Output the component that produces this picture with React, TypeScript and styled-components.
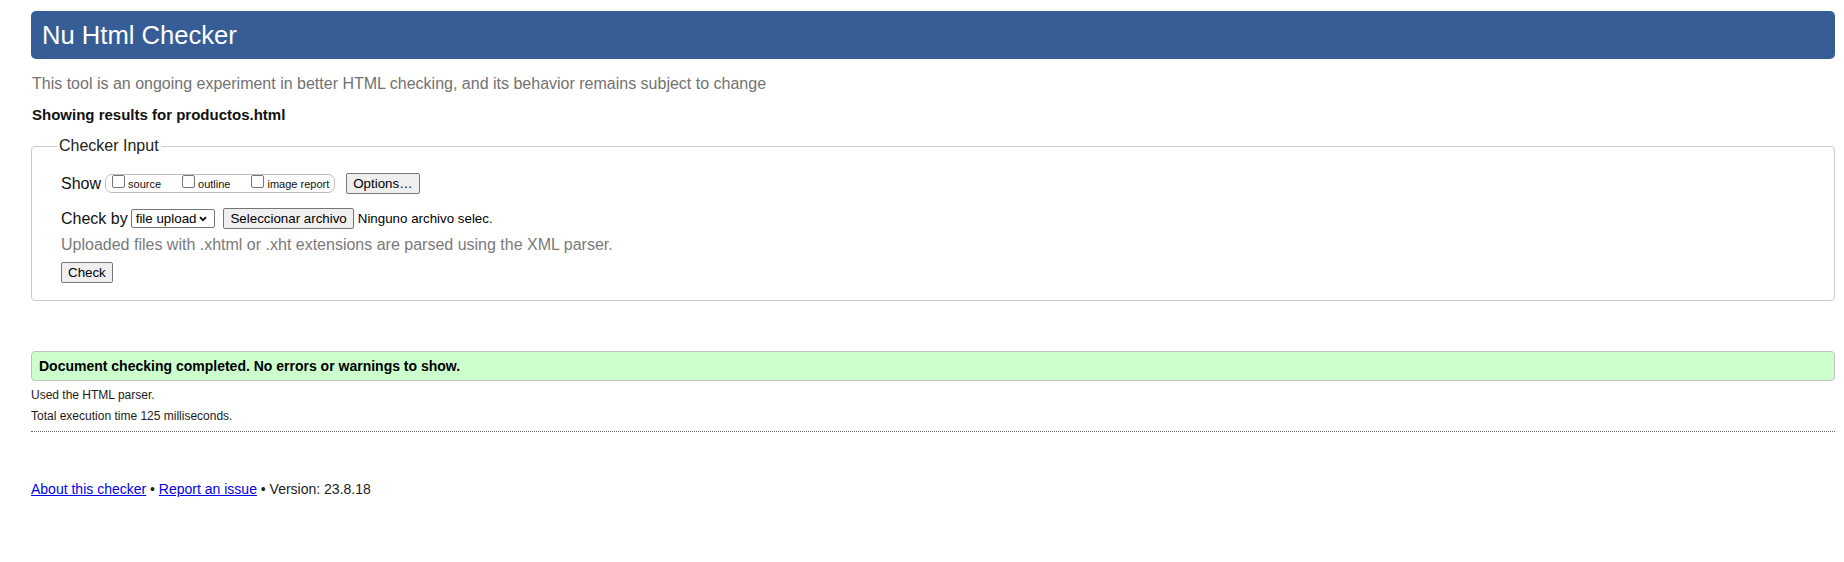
import React from "react";
import styled, { createGlobalStyle } from "styled-components";

const GlobalStyle = createGlobalStyle`
  html, body {
    margin: 0;
    padding: 0;
    background: #ffffff;
  }
  body {
    font-family: "Liberation Sans", Arial, Helvetica, sans-serif;
    color: #1b1b1b;
  }
  * { box-sizing: border-box; }
`;

const Page = styled.main`
  padding: 11px 9px 40px 31px;
  display: flex;
  flex-direction: column;
`;

const Banner = styled.header`
  height: 48px;
  background: #365d95;
  border-radius: 5px;
  display: flex;
  align-items: center;
  padding-left: 11px;
`;

const Title = styled.h1`
  margin: 0;
  font-size: 25.6px;
  font-weight: 400;
  line-height: 30px;
  color: #ffffff;
`;

const Intro = styled.p`
  margin: 16px 0 0 1px;
  font-size: 16px;
  line-height: 18px;
  color: #727272;
`;

const ResultsFor = styled.h2`
  margin: 13px 0 0 1px;
  font-size: 15px;
  line-height: 17px;
  font-weight: 700;
  color: #111111;
`;

const InputFieldset = styled.fieldset`
  margin: 14px 0 0 0;
  border: 1px solid #cccccc;
  border-radius: 4px;
  padding: 18px 20px 17px 29px;
  min-width: 0;
`;

const Legend = styled.legend`
  margin-left: -4px;
  padding: 0 2px;
  font-size: 16px;
  line-height: 18px;
  color: #222222;
`;

const Row = styled.div<{ $top?: number }>`
  display: flex;
  align-items: center;
  height: 21px;
  margin-top: ${(p) => p.$top ?? 0}px;
`;

const RowLabel = styled.span`
  font-size: 16px;
  line-height: 18px;
  color: #111111;
`;

const OptionsGroup = styled.span`
  display: inline-flex;
  align-items: flex-start;
  height: 19px;
  margin: 0 11px 0 4px;
  padding: 0 5px 0 6px;
  border: 1px solid #bdbdbd;
  border-radius: 7px;
  gap: 21px;
`;

const OptionLabel = styled.label`
  display: inline-flex;
  align-items: flex-start;
  gap: 3px;
  font-size: 11px;
  line-height: 13px;
  color: #111111;
`;

const OptionText = styled.span`
  margin-top: 3px;
`;

const Box = styled.input`
  appearance: none;
  -webkit-appearance: none;
  width: 13px;
  height: 13px;
  margin: 0;
  border: 1px solid #767676;
  border-radius: 2px;
  background: #ffffff;
`;

const Btn = styled.button<{ $left?: number }>`
  height: 21px;
  margin: 0 0 0 ${(p) => p.$left ?? 0}px;
  padding: 0 6px;
  font-family: "Liberation Sans", Arial, sans-serif;
  font-size: 13.333px;
  line-height: 19px;
  color: #000000;
  background: #efefef;
  border: 1px solid #767676;
  border-radius: 2px;
  align-self: flex-start;
`;

const SelectBox = styled.span`
  display: inline-flex;
  align-items: center;
  height: 19px;
  margin-left: 3px;
  padding: 0 7px 0 4px;
  border: 1px solid #767676;
  border-radius: 2px;
  background: #ffffff;
  font-size: 13.333px;
  color: #000000;
  gap: 3px;
`;

const FileName = styled.span`
  margin-left: 4px;
  font-size: 13.333px;
  color: #000000;
`;

const Note = styled.p`
  margin: 7px 0 0 0;
  font-size: 16px;
  line-height: 18px;
  color: #7a7a7a;
`;

const CheckRow = styled.div`
  margin-top: 8px;
  display: flex;
`;

const Success = styled.div`
  margin-top: 50px;
  height: 30px;
  display: flex;
  align-items: center;
  padding-left: 7px;
  background: #ccffcc;
  border: 1px solid #c2c2c2;
  border-radius: 4px;
  font-size: 14px;
  font-weight: 700;
  color: #000000;
`;

const Meta = styled.p<{ $top: number }>`
  margin: ${(p) => p.$top}px 0 0 0;
  font-size: 12px;
  line-height: 14px;
  color: #1b1b1b;
`;

const Divider = styled.hr`
  margin: 8px 0 0 0;
  border: none;
  border-top: 1px dotted #6a6a6a;
  height: 0;
`;

const Footer = styled.footer`
  margin-top: 49px;
  font-size: 14px;
  line-height: 16px;
  color: #222222;
`;

const FootLink = styled.a`
  color: #0000ee;
  text-decoration: underline;
`;

const Chevron = () => (
  <svg width="8" height="6" viewBox="0 0 8 6" aria-hidden="true">
    <path d="M1 1.2 L4 4.2 L7 1.2" fill="none" stroke="#000" strokeWidth="1.8" />
  </svg>
);

export default function App() {
  return (
    <>
      <GlobalStyle />
      <Page>
        <Banner>
          <Title>Nu Html Checker</Title>
        </Banner>
        <Intro>
          This tool is an ongoing experiment in better HTML checking, and its behavior remains subject to change
        </Intro>
        <ResultsFor>Showing results for productos.html</ResultsFor>
        <InputFieldset>
          <Legend>Checker Input</Legend>
          <Row>
            <RowLabel>Show</RowLabel>
            <OptionsGroup>
              <OptionLabel>
                <Box type="checkbox" />
                <OptionText>source</OptionText>
              </OptionLabel>
              <OptionLabel>
                <Box type="checkbox" />
                <OptionText>outline</OptionText>
              </OptionLabel>
              <OptionLabel>
                <Box type="checkbox" />
                <OptionText>image report</OptionText>
              </OptionLabel>
            </OptionsGroup>
            <Btn type="button">Options…</Btn>
          </Row>
          <Row $top={14}>
            <RowLabel>Check by</RowLabel>
            <SelectBox>
              file upload
              <Chevron />
            </SelectBox>
            <Btn type="button" $left={8}>
              Seleccionar archivo
            </Btn>
            <FileName>Ninguno archivo selec.</FileName>
          </Row>
          <Note>Uploaded files with .xhtml or .xht extensions are parsed using the XML parser.</Note>
          <CheckRow>
            <Btn type="button">Check</Btn>
          </CheckRow>
        </InputFieldset>
        <Success>Document checking completed. No errors or warnings to show.</Success>
        <Meta $top={7}>Used the HTML parser.</Meta>
        <Meta $top={7}>Total execution time 125 milliseconds.</Meta>
        <Divider />
        <Footer>
          <FootLink href="#about">About this checker</FootLink> •{" "}
          <FootLink href="#report">Report an issue</FootLink> • Version: 23.8.18
        </Footer>
      </Page>
    </>
  );
}
